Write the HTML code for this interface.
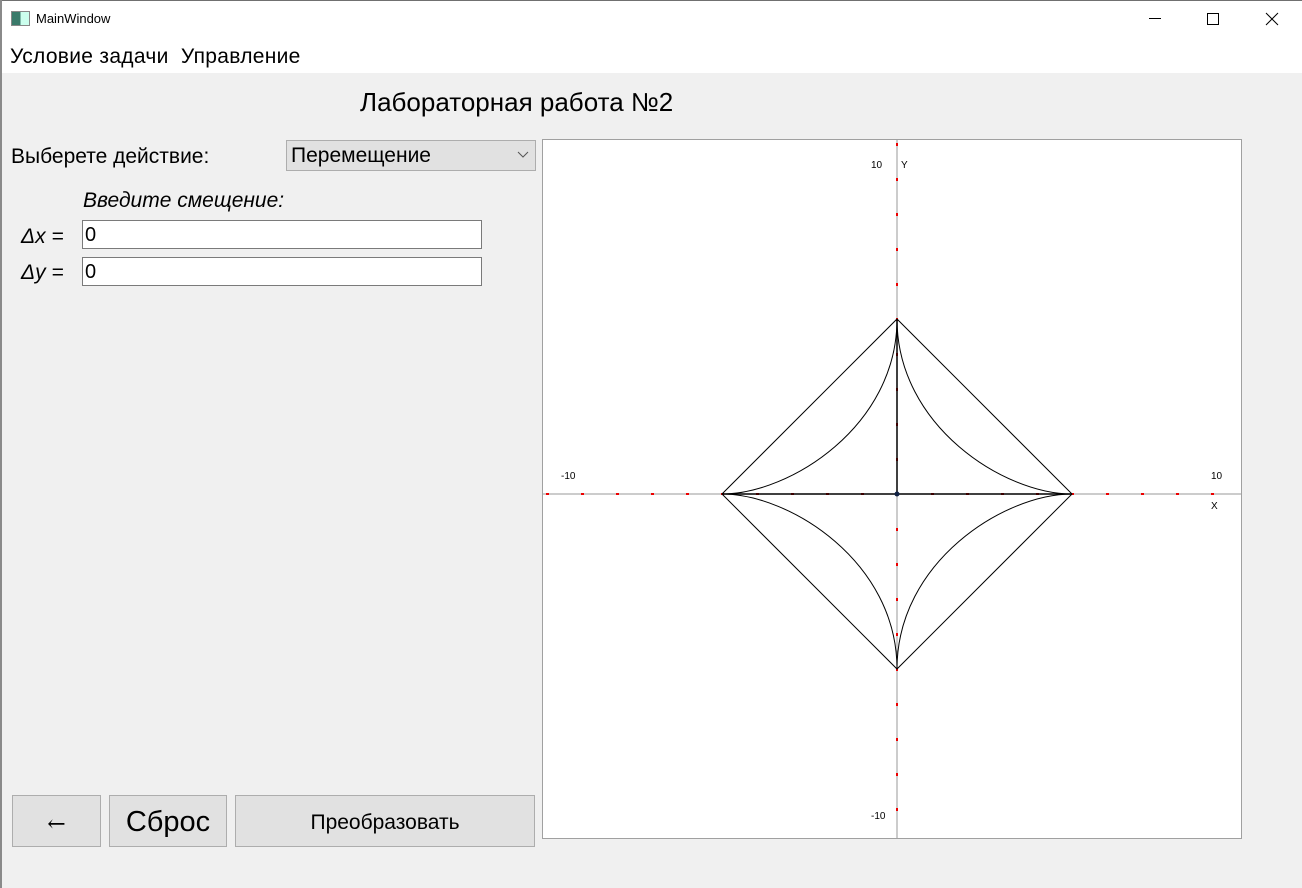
<!DOCTYPE html><html><head><meta charset="utf-8"><style>
body{margin:0;width:1302px;height:888px;background:#f0f0f0;position:relative;overflow:hidden;font-family:"Liberation Sans","DejaVu Sans",sans-serif;color:#000}
.a{position:absolute;white-space:nowrap}
.btn{position:absolute;background:#e1e1e1;border:1px solid #adadad;box-sizing:border-box;display:flex;align-items:center;justify-content:center}
.inp{position:absolute;background:#fff;border:1px solid #7a7a7a;box-sizing:border-box;font-size:20px;padding-left:2px;line-height:29px}
</style></head><body>
<div class="a" style="left:0;top:0;width:1302px;height:73px;background:#fff"></div>
<div class="a" style="left:0;top:0;width:1302px;height:1px;background:#707070"></div>
<div class="a" style="left:0;top:0;width:2px;height:888px;background:#8a8a8a"></div>
<div class="a" style="left:11px;top:11px;width:17px;height:13px;border:1px solid #888;background:linear-gradient(90deg,#3a7a6a 50%,#cfe 50%)"></div>
<div class="a" style="left:36px;top:11px;font-size:13px">MainWindow</div>
<svg class="a" style="left:1140px;top:0" width="162" height="40">
<line x1="9" y1="18.5" x2="21" y2="18.5" stroke="#000"/>
<rect x="67.5" y="13.5" width="11" height="11" fill="none" stroke="#000"/>
<path d="M126 13L138 25M138 13L126 25" stroke="#000"/>
</svg>
<div class="a" style="left:10px;top:45px;font-size:21px;letter-spacing:0.3px">Условие задачи&nbsp;&nbsp;Управление</div>
<div class="a" style="left:360px;top:87px;font-size:26px">Лабораторная работа №2</div>
<div class="a" style="left:11px;top:145px;font-size:21px">Выберете действие:</div>
<div class="btn" style="left:286px;top:140px;width:250px;height:31px;justify-content:flex-start;padding-left:4px;font-size:21px">Перемещение
<svg class="a" style="left:230px;top:10px" width="12" height="8"><path d="M1 1L6 6L11 1" fill="none" stroke="#555"/></svg></div>
<div class="a" style="left:83px;top:189px;font-size:21px;font-style:italic">Введите смещение:</div>
<div class="a" style="left:21px;top:225px;font-size:21px;font-style:italic">Δx =</div>
<div class="a" style="left:21px;top:261px;font-size:21px;font-style:italic">Δy =</div>
<div class="inp" style="left:82px;top:220px;width:400px;height:29px">0</div>
<div class="inp" style="left:82px;top:257px;width:400px;height:29px">0</div>
<div class="btn" style="left:12px;top:795px;width:89px;height:52px;font-size:22px;font-family:'DejaVu Serif',serif;padding-top:6px">←</div>
<div class="btn" style="left:109px;top:795px;width:118px;height:52px;font-size:29px;padding-top:3px">Сброс</div>
<div class="btn" style="left:235px;top:795px;width:300px;height:52px;font-size:21px;padding-top:4px">Преобразовать</div>
<svg class="a" style="left:0;top:0" width="1302" height="888">
<rect x="542.5" y="139.5" width="699" height="699" fill="#fff" stroke="#a0a0a0"/>
<line x1="543" y1="494" x2="1241" y2="494" stroke="#999"/>
<line x1="897" y1="140" x2="897" y2="838" stroke="#999"/>
<g fill="#e00">
<rect x="546" y="493" width="3" height="2"/><rect x="581" y="493" width="3" height="2"/><rect x="616" y="493" width="3" height="2"/><rect x="651" y="493" width="3" height="2"/><rect x="686" y="493" width="3" height="2"/><rect x="721" y="493" width="3" height="2"/><rect x="756" y="493" width="3" height="2"/><rect x="791" y="493" width="3" height="2"/><rect x="826" y="493" width="3" height="2"/><rect x="861" y="493" width="3" height="2"/><rect x="931" y="493" width="3" height="2"/><rect x="966" y="493" width="3" height="2"/><rect x="1001" y="493" width="3" height="2"/><rect x="1036" y="493" width="3" height="2"/><rect x="1071" y="493" width="3" height="2"/><rect x="1106" y="493" width="3" height="2"/><rect x="1141" y="493" width="3" height="2"/><rect x="1176" y="493" width="3" height="2"/><rect x="1211" y="493" width="3" height="2"/>
<rect x="896" y="143" width="2" height="3"/><rect x="896" y="178" width="2" height="3"/><rect x="896" y="213" width="2" height="3"/><rect x="896" y="248" width="2" height="3"/><rect x="896" y="283" width="2" height="3"/><rect x="896" y="318" width="2" height="3"/><rect x="896" y="353" width="2" height="3"/><rect x="896" y="388" width="2" height="3"/><rect x="896" y="423" width="2" height="3"/><rect x="896" y="458" width="2" height="3"/><rect x="896" y="528" width="2" height="3"/><rect x="896" y="563" width="2" height="3"/><rect x="896" y="598" width="2" height="3"/><rect x="896" y="633" width="2" height="3"/><rect x="896" y="668" width="2" height="3"/><rect x="896" y="703" width="2" height="3"/><rect x="896" y="738" width="2" height="3"/><rect x="896" y="773" width="2" height="3"/><rect x="896" y="808" width="2" height="3"/>
</g>
<line x1="722" y1="494" x2="1072" y2="494" stroke="#000" stroke-width="1.5"/>
<line x1="897" y1="319" x2="897" y2="494" stroke="#000" stroke-width="1.5"/>
<g fill="none" stroke="#000" stroke-width="1">
<path d="M722 494L897 319L1072 494L897 669Z"/>
<path d="M722 494C790 494 897 426 897 319C897 426 1004 494 1072 494C1004 494 897 562 897 669C897 562 790 494 722 494Z"/>
</g>
<circle cx="897" cy="494" r="2.5" fill="#124"/>
<g font-family="Liberation Sans,sans-serif" font-size="10">
<text x="871" y="168">10</text><text x="901" y="168">Y</text>
<text x="561" y="479">-10</text><text x="1211" y="479">10</text>
<text x="1211" y="509">X</text><text x="871" y="819">-10</text>
</g>
</svg>
</body></html>
